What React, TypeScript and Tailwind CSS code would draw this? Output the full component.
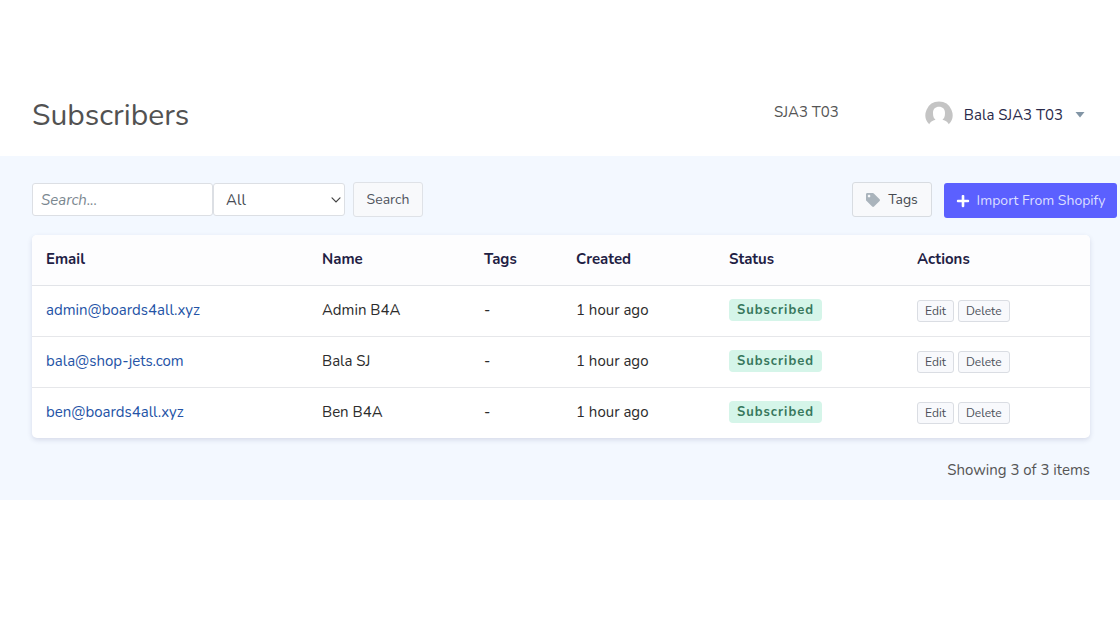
import { useState } from 'react';
import { FaPlus, FaTag } from 'react-icons/fa';

interface Subscriber {
  email: string;
  name: string;
  tags: string;
  created: string;
  status: string;
}

const subscribers: Subscriber[] = [
  { email: 'admin@boards4all.xyz', name: 'Admin B4A', tags: '-', created: '1 hour ago', status: 'Subscribed' },
  { email: 'bala@shop-jets.com', name: 'Bala SJ', tags: '-', created: '1 hour ago', status: 'Subscribed' },
  { email: 'ben@boards4all.xyz', name: 'Ben B4A', tags: '-', created: '1 hour ago', status: 'Subscribed' },
];

const columns = [
  { label: 'Email', width: 'w-[276px]' },
  { label: 'Name', width: 'w-[162px]' },
  { label: 'Tags', width: 'w-[92px]' },
  { label: 'Created', width: 'w-[153px]' },
  { label: 'Status', width: 'w-[188px]' },
  { label: 'Actions', width: 'w-[187px]' },
];

// ─── Header ───────────────────────────────────────────────────────────────────

function Avatar() {
  return (
    <svg width="28" height="28" viewBox="0 0 28 28" aria-hidden="true">
      <path
        fill="#c4c4c4"
        d="M14 .5a13.500 13.500 0 0 0-9.800 22.800c1-2.300 3-3.800 6.300-4.500C8.800 17.300 8 15.500 8 12C8 8 10.400 5.800 14 5.800S20 8 20 12c0 3.500-.8 5.300-2.500 6.800c3.300.7 5.300 2.200 6.300 4.500A13.500 13.500 0 0 0 14 .5z"
      />
    </svg>
  );
}

function Header() {
  return (
    <header className="flex items-center pt-24 pb-5 pl-8 pr-[35px]">
      <h1 className="flex-1 text-[30px] leading-10 text-[#525252]">Subscribers</h1>
      <span className="mr-[86px] pb-2 text-[#555]">SJA3 T03</span>
      <button type="button" className="flex items-center pb-0.5 text-[#2a2a4a]">
        <Avatar />
        <span className="ml-[11px] mr-3">Bala SJA3 T03</span>
        <svg width="10" height="6" viewBox="0 0 10 6" aria-hidden="true">
          <path d="M.5 0h9L5 5.500z" fill="#8295a5" />
        </svg>
      </button>
    </header>
  );
}

// ─── Toolbar ──────────────────────────────────────────────────────────────────

function Toolbar() {
  const [query, setQuery] = useState('');
  const [filter, setFilter] = useState('all');

  return (
    <div className="flex items-center pl-8 pr-[3px]">
      <form className="flex flex-1 items-center" onSubmit={e => e.preventDefault()}>
        <input
          type="text"
          aria-label="Search subscribers"
          placeholder="Search..."
          value={query}
          onChange={e => setQuery(e.target.value)}
          className="h-[33px] w-[181px] rounded-[3px] border border-[#dcdfe4] bg-white px-2 text-[#444] placeholder:italic placeholder:text-[#7b8790]"
        />
        <div className="relative">
          <select
            aria-label="Status filter"
            value={filter}
            onChange={e => setFilter(e.target.value)}
            className="block h-[33px] w-[132px] appearance-none rounded-[3px] border border-[#dcdfe4] bg-white pl-3 pr-6 text-[#484c54]"
          >
            <option value="all">All</option>
            <option value="subscribed">Subscribed</option>
            <option value="unsubscribed">Unsubscribed</option>
          </select>
          <svg className="pointer-events-none absolute right-1 top-[14px]" width="10" height="6" viewBox="0 0 10 6" aria-hidden="true">
            <path d="M1 .8l4 4 4-4" fill="none" stroke="#444" strokeWidth="1.2" strokeLinecap="round" />
          </svg>
        </div>
        <button type="submit" className="ml-2 h-[35px] w-[70px] rounded-[3px] border border-[#dfe2e7] bg-[#f8f9fb] text-[14px] text-[#50555e]">
          Search
        </button>
      </form>
      <button
        type="button"
        className="flex h-[35px] w-[80px] items-center justify-center gap-2 rounded-[3px] border border-[#d8dce1] bg-[#f8f9fb] text-[14px] text-[#454950]"
      >
        <FaTag className="size-[14px] text-[#aab4bc]" />
        Tags
      </button>
      <button
        type="button"
        className="mt-[2px] ml-3 flex h-[35px] w-[173px] items-center justify-center gap-[7px] rounded-[3px] bg-[#5b60ff] text-[14px] text-[#dcdfff]"
      >
        <FaPlus className="size-[14px] text-white" />
        Import From Shopify
      </button>
    </div>
  );
}

// ─── Table ────────────────────────────────────────────────────────────────────

function SmallButton({ label }: { label: string }) {
  return (
    <button type="button" className="h-[22px] rounded-[3px] border border-[#dadde3] bg-[#f8f9fc] px-[7px] text-[12px] leading-5 text-[#4c5059]">
      {label}
    </button>
  );
}

function SubscriberTable() {
  return (
    <div className="mt-[17px] ml-8 mr-[30px] overflow-hidden rounded-[5px] bg-white shadow-[0_2px_5px_rgba(60,70,120,0.16)]">
      <table className="w-full table-fixed text-left">
        <thead className="bg-[#fdfdfe]">
          <tr className="h-[50px] border-b border-[#e2e4e8]">
            {columns.map(column => (
              <th key={column.label} className={`${column.width} px-[14px] pb-0.5 font-bold text-[#1f2144]`}>
                {column.label}
              </th>
            ))}
          </tr>
        </thead>
        <tbody>
          {subscribers.map(s => (
            <tr key={s.email} className="h-[51px] border-b border-[#e6e7ea] text-[#2c2c2c] last:border-b-0">
              <td className="px-[14px] pb-0.5">
                <a href={`mailto:${s.email}`} className="text-[#2453a6]">{s.email}</a>
              </td>
              <td className="px-[14px] pb-0.5">{s.name}</td>
              <td className="px-[14px] pb-0.5">{s.tags}</td>
              <td className="px-[14px] pb-0.5">{s.created}</td>
              <td className="px-[14px] pb-0.5">
                <span className="flex h-[22px] w-fit items-center rounded bg-[#d5f5e9] px-2 text-[13px] font-bold tracking-[1px] text-[#37775c]">
                  {s.status}
                </span>
              </td>
              <td className="px-[14px]">
                <div className="flex gap-1">
                  <SmallButton label="Edit" />
                  <SmallButton label="Delete" />
                </div>
              </td>
            </tr>
          ))}
        </tbody>
      </table>
    </div>
  );
}

function App() {
  return (
    <div className="bg-white font-['Nunito','Lato',sans-serif] text-[15px] leading-6">
      <Header />
      <main className="bg-[#f3f8ff] pt-[25px] pb-[18px]">
        <Toolbar />
        <SubscriberTable />
        <p className="mt-5 pr-[30px] text-right text-[#555]">Showing 3 of 3 items</p>
      </main>
    </div>
  );
}

export default App;
